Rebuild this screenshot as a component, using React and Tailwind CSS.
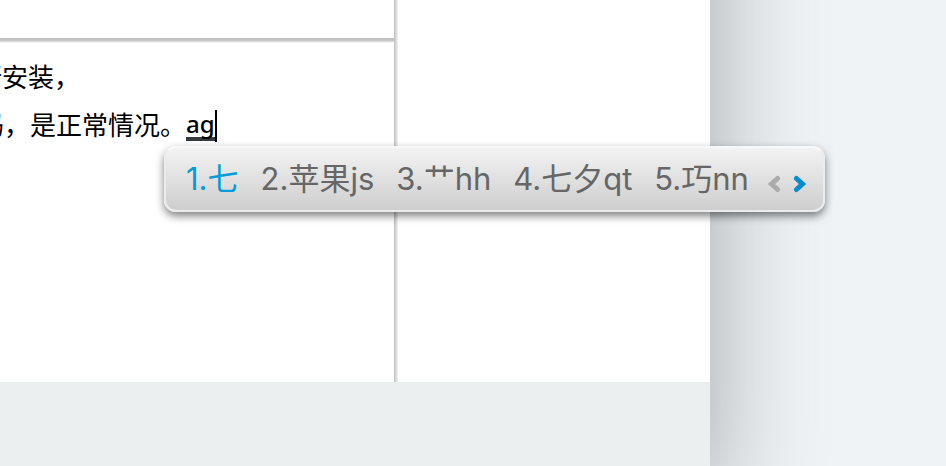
const candidates = ["1.七", "2.苹果js", "3.艹hh", "4.七夕qt", "5.巧nn"];

function Chevron({ d, color }) {
  return (
    <svg viewBox="0 0 14 18" className="h-[18px] w-[14px]" fill="none" stroke={color} strokeWidth="5" strokeLinecap="round" strokeLinejoin="miter" aria-hidden="true">
      <path d={d} />
    </svg>
  );
}

function CandidateBar() {
  return (
    <div className="absolute left-[164px] top-[146px] flex h-[66px] items-center rounded-xl border-2 border-[#ececec] border-t-[#f8f8f8] bg-linear-to-b from-[#f3f3f3] to-[#cecece] pr-4 pl-5 shadow-[0_4px_8px_rgba(0,0,0,0.5)]">
      <ol className="flex gap-[22px] text-[31px] leading-[40px] text-[#666]">
        {candidates.map((text, i) => (
          <li key={text}>
            <button type="button" className={i === 0 ? "text-[#049bd9]" : ""}>{text}</button>
          </li>
        ))}
      </ol>
      <div className="mt-2.5 ml-[18px] flex gap-3">
        <button type="button" aria-label="上一页"><Chevron d="M10.5 3.5 L4.5 9 L10.5 14.5" color="#ababab" /></button>
        <button type="button" aria-label="下一页"><Chevron d="M3.5 3.5 L9.5 9 L3.5 14.5" color="#078bd0" /></button>
      </div>
    </div>
  );
}

export default function App() {
  return (
    <div className="relative h-screen overflow-hidden bg-[#eff3f6] font-['Inter','Noto_Sans_CJK_SC',sans-serif]">
      <main className="-mt-32 flex h-[calc(100%+172px)] w-[76%] max-w-[710px] flex-col bg-[#ebeff0] pt-32 shadow-[0_0_108px_rgba(0,0,0,0.32)]">
        <div className="flex h-[382px] bg-white">
          <section className="w-[394px] shrink-0">
            <div className="h-[38px]" />
            <div className="h-[5px] bg-linear-to-b from-[#bcbcbc] via-[#c8c8c8] to-white" />
            <div className="flex flex-col items-start pt-[11px] text-[26px] leading-[48px] whitespace-nowrap text-black">
              <p className="-ml-6">行安装，</p>
              <p className="-ml-[22px] flex items-center">
                码，是正常情况。
                <span className="border-b-4 border-[#383b3d] font-['Noto_Sans',sans-serif] text-[24px] leading-[26px] font-medium">ag</span>
                <span className="h-8 w-0.5 bg-black" />
              </p>
            </div>
          </section>
          <div className="w-1 bg-linear-to-r from-[#bebebe] to-[#f4f4f4]" />
          <div className="flex-1" />
        </div>
      </main>
      <CandidateBar />
    </div>
  );
}
